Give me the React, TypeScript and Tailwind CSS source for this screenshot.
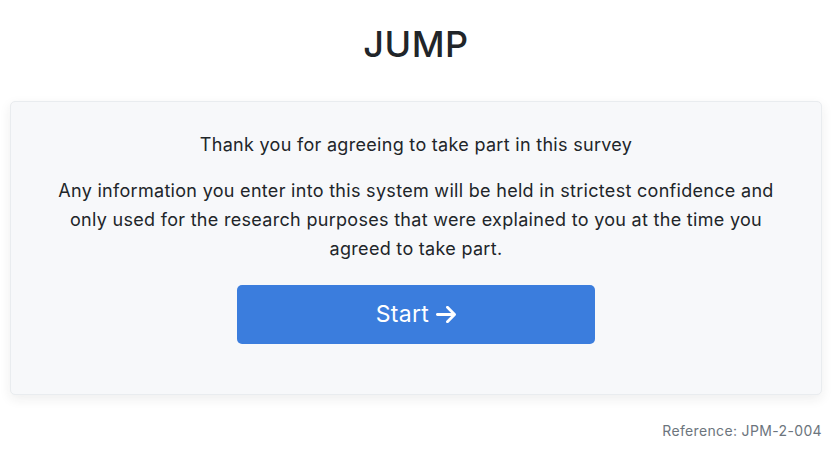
export default function App() {
  return (
    <div
      className="min-h-screen bg-white text-[#212529]"
      style={{ fontFamily: "Inter, 'Noto Sans', sans-serif" }}
    >
      <div className="px-[10px] pt-[22px]">
        {/* Title */}
        <h1 className="text-center text-[36px] font-medium leading-[44px] tracking-[0.5px] mb-[35px]">
          JUMP
        </h1>

        {/* Card */}
        <div className="rounded-[5px] border border-[#e9ecef] bg-[#f7f8fa] shadow-[0_4px_12px_rgba(33,37,41,0.08)] px-[44px] pt-[28px] pb-[50px] text-center">
          <p className="text-[18px] leading-[29px] tracking-[0.3px] mb-[17px]">
            Thank you for agreeing to take part in this survey
          </p>
          <p className="text-[18px] leading-[29px] tracking-[0.3px] mb-[22px]">
            Any information you enter into this system will be held in strictest
            confidence and only used for the research purposes that were
            explained to you at the time you agreed to take part.
          </p>
          <button className="inline-flex items-center justify-center gap-[7px] w-[358px] h-[59px] rounded-[5px] bg-[#3b7ddd] text-white text-[23px] tracking-[0.3px]">
            Start
            <svg viewBox="0 0 448 512" className="w-[20px] h-[23px] fill-current">
              <path d="M438.6 278.6c12.5-12.5 12.5-32.8 0-45.3l-160-160c-12.5-12.5-32.8-12.5-45.3 0s-12.5 32.8 0 45.3L338.8 224 32 224c-17.7 0-32 14.3-32 32s14.3 32 32 32l306.7 0L233.4 393.4c-12.5 12.5-12.5 32.8 0 45.3s32.8 12.5 45.3 0l160-160z" />
            </svg>
          </button>
        </div>

        {/* Reference */}
        <p className="text-right text-[14px] tracking-[0.35px] text-[#6c757d] mt-[25px]">
          Reference: JPM-2-004
        </p>
      </div>
    </div>
  );
}
